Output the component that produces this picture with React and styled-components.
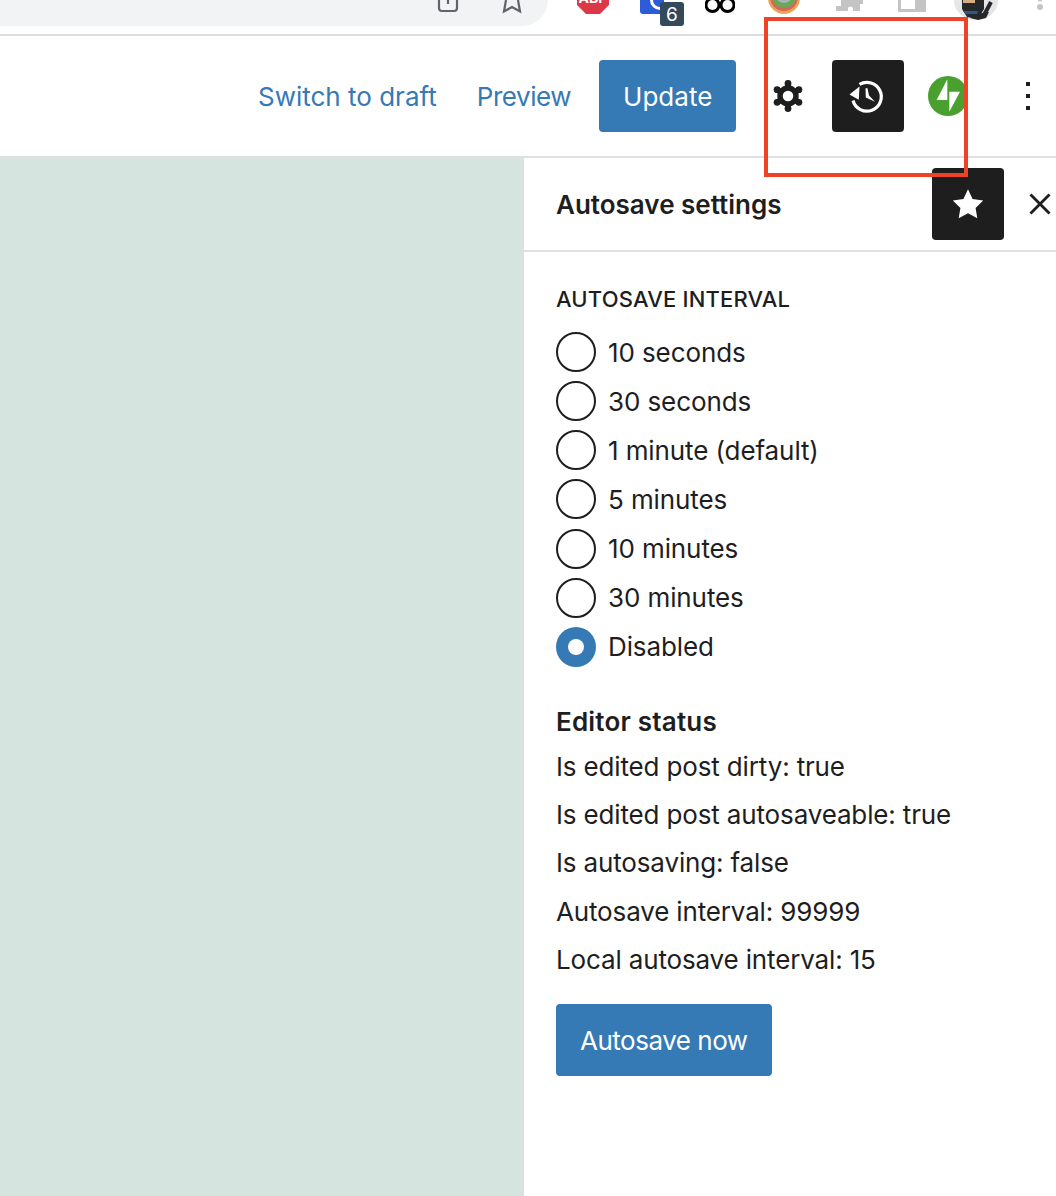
import React from 'react';
import styled, { createGlobalStyle } from 'styled-components';

const Global = createGlobalStyle`
  html, body { margin: 0; padding: 0; background: #fff; }
  body { font-family: Inter, "Liberation Sans", sans-serif; color: #1e1e1e; -webkit-font-smoothing: antialiased; }
`;
const Page = styled.div`
  position: relative; width: 1056px; height: 1196px; overflow: hidden; background: #fff;
  display: flex; flex-direction: column;
`;
const ChromeBar = styled.div`
  height: 34px; flex: none; display: flex; align-items: flex-start; overflow: hidden;
  border-bottom: 2px solid #dcdcdc; background: #fff;
`;
const Omnibox = styled.div`
  width: 548px; height: 26px; flex: none; background: #f1f3f4; border-bottom-right-radius: 26px;
  display: flex; justify-content: flex-end; gap: 40px; padding-right: 24px; box-sizing: border-box;
`;
const Extensions = styled.div`
  display: flex; align-items: flex-start; flex: 1;
`;
const Ext = styled.div`
  position: relative; flex: none; margin-left: ${p => p.$ml}px;
  svg { display: block; }
`;
const Badge = styled.span`
  position: absolute; left: 20px; top: 2px; width: 24px; height: 24px; border-radius: 3px; background: #34495c; color: #fff;
  font-size: 19px; line-height: 26px; text-align: center;
`;
const Header = styled.header`
  height: 122px; flex: none; box-sizing: border-box; border-bottom: 2px solid #e0e0e0;
  display: flex; align-items: center; padding-left: 258px;
`;
const TextLink = styled.a`
  color: #3579b5; font-size: 26px; line-height: 32px; white-space: nowrap; flex: none;
  margin-right: ${p => p.$mr}px; margin-top: 2px; letter-spacing: ${p => p.$ls || 0}px;
`;
const PrimaryButton = styled.button`
  background: #3579b5; color: #fff; border: 0; border-radius: 4px; height: 72px; padding: 2px 24px 0;
  font: 400 26px/32px Inter, sans-serif; flex: none;
`;
const IconBox = styled.div`
  width: 72px; height: 72px; flex: none; border-radius: 4px; display: flex; align-items: center; justify-content: center;
  background: ${p => p.$active ? '#1e1e1e' : 'transparent'}; color: ${p => p.$active ? '#fff' : '#1e1e1e'};
  margin-left: ${p => p.$ml || 0}px;
`;
const Body = styled.div`
  flex: 1; display: flex; min-height: 0;
`;
const Canvas = styled.div`
  width: 524px; flex: none; background: #d5e4df;
`;
const Sidebar = styled.aside`
  flex: 1; display: flex; flex-direction: column;
`;
const SideHead = styled.div`
  height: 94px; flex: none; box-sizing: border-box; border-bottom: 2px solid #e0e0e0;
  display: flex; align-items: center; padding-left: 32px;
`;
const SideTitle = styled.h2`
  margin: 2px 0 0; font-size: 26px; font-weight: 600; line-height: 32px; width: 376px; flex: none;
`;
const SideBody = styled.div`
  padding: 34px 32px 0; display: flex; flex-direction: column;
`;
const Legend = styled.div`
  font-size: 22px; line-height: 26px; font-weight: 500; text-transform: uppercase; margin-bottom: 20px; letter-spacing: 0.18px;
`;
const RadioRow = styled.label`
  display: flex; align-items: center; gap: 12px; height: 40px; margin-bottom: 9.17px; font-size: 26px; letter-spacing: -0.1px;
`;
const RadioCircle = styled.span`
  width: 40px; height: 40px; box-sizing: border-box; border-radius: 50%; flex: none;
  border: 2px solid #1e1e1e;
  ${p => p.$checked && `border: 0; background: #3579b5; display: flex; align-items: center; justify-content: center;
    &::after { content: ""; width: 16px; height: 16px; border-radius: 50%; background: #fff; }`}
`;
const StatusTitle = styled.h3`
  margin: 30px 0 13px; font-size: 26px; line-height: 32px; font-weight: 600; letter-spacing: 0.2px;
`;
const StatusLine = styled.p`
  margin: 0 0 16.2px; font-size: 26px; line-height: 32px; letter-spacing: -0.15px;
`;
const WideButton = styled(PrimaryButton)`
  align-self: flex-start; margin-top: 12px; letter-spacing: -0.48px;
`;
const Annotation = styled.div`
  position: absolute; left: 764px; top: 17px; width: 204px; height: 160px; box-sizing: border-box;
  border: 4px solid #ee4326; pointer-events: none;
`;

const opts = ['10 seconds','30 seconds','1 minute (default)','5 minutes','10 minutes','30 minutes','Disabled'];
const lines = ['Is edited post dirty: true','Is edited post autosaveable: true','Is autosaving: false','Autosave interval: 99999','Local autosave interval: 15'];
const angles = [90, 30, -30, -90, -150, 150];

function GearIcon() {
  return (
    <svg width="32" height="34" viewBox="0 0 32 34" fill="none" stroke="currentColor">
      <circle cx="16" cy="17" r="8" strokeWidth="5.4" />
      {angles.map(a => {
        const r = a * Math.PI / 180;
        return (
          <g key={a}>
            <line x1={16 + 8 * Math.cos(r)} y1={17 - 8 * Math.sin(r)} x2={16 + 12.6 * Math.cos(r)} y2={17 - 12.6 * Math.sin(r)} strokeWidth="6" />
            <circle cx={16 + 12.6 * Math.cos(r)} cy={17 - 12.6 * Math.sin(r)} r="3.4" fill="currentColor" stroke="none" />
          </g>
        );
      })}
    </svg>
  );
}

export default function App() {
  return (
    <Page>
      <Global />
      <ChromeBar>
        <Omnibox>
          <svg width="24" height="14" viewBox="0 0 24 14" fill="none" stroke="#616468" strokeWidth="2.2"><path d="M3 0v8a3 3 0 0 0 3 3h12a3 3 0 0 0 3-3V0"/><path d="M12 0v4"/></svg>
          <svg width="24" height="14" viewBox="0 0 24 14" fill="none" stroke="#616468" strokeWidth="2.2"><path d="M6 0 4 11.500l8-4.500 8 4.500L18 0"/></svg>
        </Omnibox>
        <Extensions>
          <Ext $ml={29}>
            <svg width="32" height="14" viewBox="0 0 32 14">
              <path d="M0 0h32v5l-9 9H9L0 5z" fill="#dc3848"/>
              <text x="16" y="3" textAnchor="middle" fontFamily="Inter" fontWeight="700" fontSize="14" fill="#fff">ABP</text>
            </svg>
          </Ext>
          <Ext $ml={31}>
            <svg width="44" height="28" viewBox="0 0 44 28">
              <path d="M0 0h24v14H3a3 3 0 0 1-3-3z" fill="#2d5cd8"/>
              <circle cx="20" cy="0" r="8.500" fill="none" stroke="#fff" strokeWidth="3"/>
            </svg>
            <Badge>6</Badge>
          </Ext>
          <Ext $ml={21}>
            <svg width="30" height="14" viewBox="0 0 30 14">
              <circle cx="7.500" cy="5" r="8" fill="#000"/>
              <circle cx="22.500" cy="5" r="8" fill="#000"/>
              <circle cx="7.500" cy="5" r="5" fill="#fff"/>
              <circle cx="22.500" cy="5" r="5" fill="#fff"/>
            </svg>
          </Ext>
          <Ext $ml={33}>
            <svg width="32" height="14" viewBox="0 0 32 14">
              <circle cx="16" cy="-2" r="16" fill="#eba45f"/>
              <circle cx="16" cy="-3" r="14" fill="#d4694f"/>
              <circle cx="16" cy="-4" r="12" fill="#6ba657"/>
              <circle cx="16" cy="-5" r="8" fill="#a3b8b0"/>
            </svg>
          </Ext>
          <Ext $ml={35}>
            <svg width="28" height="12" viewBox="0 0 28 12">
              <path d="M6 0h22v4h-3v7h-7V9a2.500 2.500 0 0 0-5 0v2H1V6h5z" fill="#c4c4c4"/>
            </svg>
          </Ext>
          <Ext $ml={35}>
            <svg width="28" height="12" viewBox="0 0 28 12">
              <path d="M0 0h28v12H0z" fill="#c4c4c4"/>
              <path d="M3 0h14v9H3z" fill="#fff"/>
            </svg>
          </Ext>
          <Ext $ml={28}>
            <svg width="44" height="20" viewBox="0 0 44 20">
              <path d="M0 0h44c0 12-10 20-22 20S0 12 0 0z" fill="#e6e6e6"/>
              <path d="M8 0h22v9l-3 5-4 5-10-2-5-8z" fill="#26282c"/>
              <path d="M9 0h12v3H9z" fill="#d9ae86"/>
              <path d="M9 11h15l-1 3H12z" fill="#2b5a88"/>
              <path d="M37 2 29 17" stroke="#26282c" strokeWidth="4"/>
              <path d="M16 18l12-5 7-1-3 6-8 2z" fill="#26282c"/>
            </svg>
          </Ext>
          <Ext $ml={39}>
            <svg width="6" height="11" viewBox="0 0 6 11">
              <circle cx="3" cy="7" r="3" fill="#c4c4c4"/>
              <circle cx="3" cy="-1" r="2.500" fill="#c4c4c4"/>
            </svg>
          </Ext>
        </Extensions>
      </ChromeBar>
      <Header>
        <TextLink $mr={40}>Switch to draft</TextLink>
        <TextLink $mr={28} $ls={-0.45}>Preview</TextLink>
        <PrimaryButton>Update</PrimaryButton>
        <IconBox $ml={16}><GearIcon /></IconBox>
        <IconBox $active $ml={8}>
          <svg width="72" height="72" viewBox="0 0 72 72" fill="currentColor">
            <path d="M27.500 24.400A14.400 14.400 0 1 1 21 40.500" fill="none" stroke="currentColor" strokeWidth="3.200"/>
            <path d="M17.500 34.500 27.500 26.500 26.800 39.800z"/>
            <path d="M33.500 28.300h2l1.500 7.200 6 6.200-9.200-4.200z"/>
          </svg>
        </IconBox>
        <IconBox $ml={8}>
          <svg width="40" height="40" viewBox="0 0 40 40">
            <circle cx="20" cy="20" r="20" fill="#4aa02f"/>
            <path d="M19.300 3.300V24H8.700z" fill="#fff"/>
            <path d="M21.300 35.700V15.700H32z" fill="#fff"/>
          </svg>
        </IconBox>
        <IconBox $ml={8}>
          <svg width="48" height="48" viewBox="0 0 48 48" fill="currentColor"><path d="M22 10h4v4h-4zM22 22h4v4h-4zM22 34h4v4h-4z"/></svg>
        </IconBox>
      </Header>
      <Body>
        <Canvas />
        <Sidebar>
          <SideHead>
            <SideTitle>Autosave settings</SideTitle>
            <IconBox $active>
              <svg width="52" height="52" viewBox="0 0 24 24" fill="currentColor"><path d="m12 5.200 2.100 4.500 4.900.7-3.500 3.400.8 4.800-4.300-2.300-4.300 2.300.8-4.800L5 10.400l4.900-.7z"/></svg>
            </IconBox>
            <IconBox>
              <svg width="48" height="48" viewBox="0 0 48 48" fill="none" stroke="currentColor" strokeWidth="2.800"><path d="M14.500 14.500l19 19M33.500 14.500l-19 19"/></svg>
            </IconBox>
          </SideHead>
          <SideBody>
            <Legend>Autosave interval</Legend>
            {opts.map((o, i) => (
              <RadioRow key={o}><RadioCircle $checked={i === 6} />{o}</RadioRow>
            ))}
            <StatusTitle>Editor status</StatusTitle>
            {lines.map(l => <StatusLine key={l}>{l}</StatusLine>)}
            <WideButton>Autosave now</WideButton>
          </SideBody>
        </Sidebar>
      </Body>
      <Annotation />
    </Page>
  );
}
